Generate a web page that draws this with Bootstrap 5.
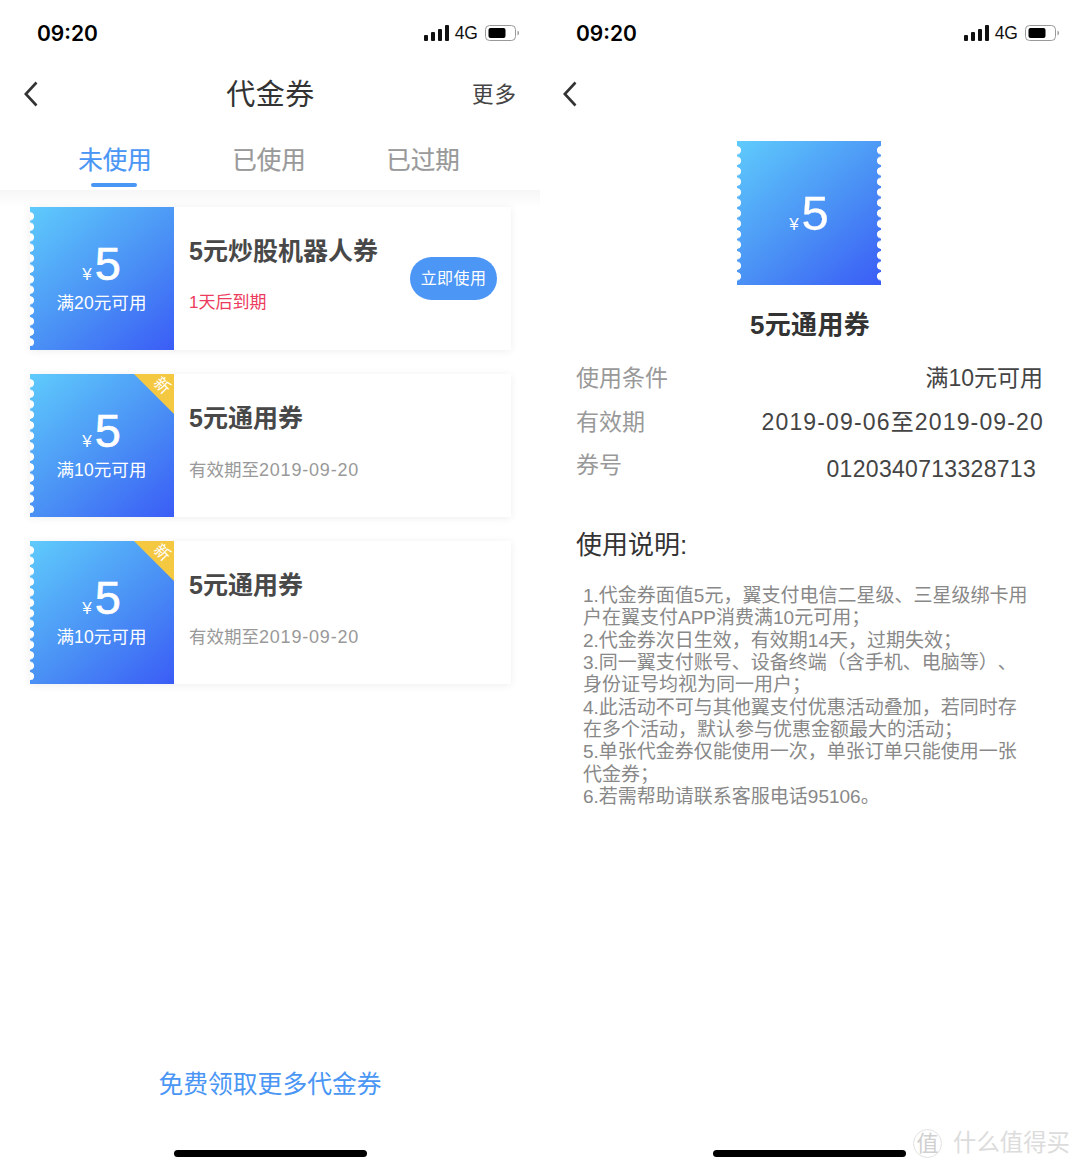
<!DOCTYPE html>
<html lang="zh">
<head>
<meta charset="utf-8">
<title>代金券</title>
<link href="https://cdn.jsdelivr.net/npm/bootstrap@5.3.0/dist/css/bootstrap.min.css" rel="stylesheet">
<style>
html,body{margin:0;height:1169px;overflow:hidden;background:#fff}
body{font-family:"Liberation Sans","Noto Sans CJK SC",sans-serif;color:#333;width:1080px;text-spacing-trim:space-all}
.screen{width:540px;height:1169px;flex:none;position:relative}
.status-row{height:66px;padding:0 21px 0 37px}
.clock{font-family:Inter,"Liberation Sans",sans-serif;font-size:21px;font-weight:600;color:#000;line-height:66px;margin-top:2px}
.net{font-size:17.5px;color:#111;margin:2px 7px 0 6px;line-height:1}
.topnav{height:56px;padding:0 24px 0 24px;position:relative}
.topnav svg{flex:0 0 14px}
.nav-side{flex:1}
.page-title{font-size:29px;color:#333;line-height:1;letter-spacing:.5px;flex:none;padding-top:2px}
.more{flex:1;font-size:21.500px;color:#444;line-height:1;letter-spacing:1px;text-align:right;padding:4px 0 0 0;margin-right:-1px}
.tabstrip{height:68px;padding-left:38px}
.tabitem{width:154px;height:68px;text-align:center;font-size:24.500px;color:#999;line-height:1;padding-top:27px;position:relative;-webkit-text-stroke:.2px currentColor}
.tabitem.on{color:#4a96f5}
.tabitem.on::after{content:"";position:absolute;left:53px;top:61px;width:46px;height:4px;border-radius:2px;background:#4a96f5}
.listarea{padding:17px 29px 0 30px;background:linear-gradient(#f6f6f6,#fff 17px);gap:24px}
.ticket{height:143px;background:#fff;box-shadow:0 1px 8px rgba(0,0,0,.07)}
.stub{width:144px;height:143px;flex:none;position:relative;overflow:hidden;color:#fff;padding-right:1px;background:linear-gradient(140deg,#5fcbfc 0%,#4a90f5 55%,#3a5cf6 100%)}
.stub::before{content:"";position:absolute;left:0;top:4px;bottom:4px;width:6px;background:radial-gradient(circle at 0 50%,#fff 3.8px,transparent 4.3px) 0 0/6px 10.5px repeat-y}
.amount{line-height:1;font-size:47px;margin-top:33px;height:47px;-webkit-text-stroke:.6px #fff}
.yen{font-size:17px;margin-right:3px;-webkit-text-stroke:0}
.cond{font-size:17.500px;line-height:1;margin-top:8px;letter-spacing:.1px}
.newtag{position:absolute;right:0;top:0;width:0;height:0;border-style:solid;border-width:0 40px 40px 0;border-color:transparent #f5c842 transparent transparent}
.newtxt{position:absolute;right:4px;top:4px;font-size:16px;color:#fff;line-height:1;transform:rotate(45deg)}
.ticket-body{padding-left:15px;min-width:0}
.ticket-name{font-size:25px;font-weight:700;color:#484848;line-height:1;margin-top:32px}
.ticket-note{font-size:17.500px;color:#999;line-height:1;margin-top:30px}
.ticket-note.warn{color:#ec3b5c;font-size:17px}
.dt{font-size:18px;letter-spacing:.8px}
.usebtn{width:87px;height:43px;border-radius:22px;background:#4c96f6;border:0;color:#fff;font-size:16px;padding:0;line-height:43px;margin:0 14px 0 auto;letter-spacing:.4px}
.getmore{position:absolute;left:0;right:0;top:1071px;text-align:center;font-size:24.800px;line-height:28px;color:#4a96f5}
.homebar{position:absolute;left:174px;top:1150px;width:193px;height:7px;border-radius:4px;background:#000}
.right-pane .homebar{left:173px}
.right-pane .status-row{padding-left:36px}
.right-pane .topnav{padding-left:23px}
.stamp{width:144px;height:144px;margin:19px 0 0 197px;position:relative;overflow:hidden;color:#fff;background:linear-gradient(140deg,#5fcbfc 0%,#4a90f5 55%,#3a5cf6 100%)}
.stamp::before,.stamp::after{content:"";position:absolute;top:4px;bottom:4px;width:6px}
.stamp::before{left:0;background:radial-gradient(circle at 0 50%,#fff 3.8px,transparent 4.3px) 0 0/6px 10.5px repeat-y}
.stamp::after{right:0;background:radial-gradient(circle at 100% 50%,#fff 3.8px,transparent 4.3px) 0 0/6px 10.5px repeat-y}
.stamp .amount{margin:0;font-size:49px;height:49px;-webkit-text-stroke:.3px #fff}
.stamp-title{font-size:26px;font-weight:700;color:#333;text-align:center;line-height:1;margin-top:27px;letter-spacing:.3px}
.kv{padding:0 37px 0 36px;height:44px;font-size:23px;line-height:1}
.kv-k{color:#999}
.kv-v{color:#444}
.kv-date{letter-spacing:1.15px;margin-right:-1px}
.kv-first{margin-top:29px}
.kv-code{padding-right:44px}
.kv-code .kv-k{margin-top:-1px}
.kv-code .kv-v{margin-top:3px;letter-spacing:.3px}
.howto{font-size:26px;color:#333;line-height:1;padding-left:36px;margin-top:33px}
.rules{padding-left:43px;margin:27px 0 0;font-size:19px;line-height:22.35px;color:#888;white-space:nowrap}
.mark-logo{position:absolute;right:10px;bottom:11px;color:#dcdcdc;font-size:23.400px;line-height:1;gap:11px}
.mark-coin{width:29px;height:29px;border:1px solid #e2e2e2;border-radius:50%;font-size:22px;line-height:27px;text-align:center;color:#d0d0d0}
</style>
</head>
<body>
<div class="d-flex">
 <section class="screen d-flex flex-column">
  <div class="status-row d-flex align-items-center justify-content-between">
   <span class="clock">09:20</span>
   <span class="d-flex align-items-center">
    <svg width="25" height="16" viewBox="0 0 25 16"><rect x="0" y="10" width="4" height="6" rx="1" fill="#111"/><rect x="7" y="7" width="4" height="9" rx="1" fill="#111"/><rect x="14" y="4" width="4" height="12" rx="1" fill="#111"/><rect x="21" y="0" width="4" height="16" rx="1" fill="#111"/></svg>
    <span class="net">4G</span>
    <svg width="34" height="16" viewBox="0 0 34 16"><rect x=".5" y=".5" width="30" height="15" rx="4" fill="none" stroke="#999"/><rect x="3.500" y="3" width="17" height="10" rx="2" fill="#000"/><path d="M32.500 5.500c1 .5 1.500 1.500 1.500 2.500s-.5 2-1.500 2.500z" fill="#999"/></svg>
   </span>
  </div>
  <div class="topnav d-flex align-items-center">
   <span class="nav-side"><svg class="d-block" width="14" height="26" viewBox="0 0 14 26"><path d="M12.500 1.500 1.800 13l10.700 11.500" fill="none" stroke="#333" stroke-width="2.600"/></svg></span>
   <span class="page-title">代金券</span>
   <span class="more">更多</span>
  </div>
  <div class="tabstrip d-flex">
   <div class="tabitem on">未使用</div>
   <div class="tabitem">已使用</div>
   <div class="tabitem">已过期</div>
  </div>
  <div class="listarea d-flex flex-column">
   <div class="ticket d-flex">
    <div class="stub text-center">
     <div class="amount"><span class="yen">¥</span>5</div>
     <div class="cond">满20元可用</div>
    </div>
    <div class="ticket-body">
     <div class="ticket-name">5元炒股机器人券</div>
     <div class="ticket-note warn">1天后到期</div>
    </div>
    <button class="usebtn align-self-center">立即使用</button>
   </div>
   <div class="ticket d-flex">
    <div class="stub text-center">
     <span class="newtag"></span><span class="newtxt">新</span>
     <div class="amount"><span class="yen">¥</span>5</div>
     <div class="cond">满10元可用</div>
    </div>
    <div class="ticket-body">
     <div class="ticket-name">5元通用券</div>
     <div class="ticket-note">有效期至<span class="dt">2019-09-20</span></div>
    </div>
   </div>
   <div class="ticket d-flex">
    <div class="stub text-center">
     <span class="newtag"></span><span class="newtxt">新</span>
     <div class="amount"><span class="yen">¥</span>5</div>
     <div class="cond">满10元可用</div>
    </div>
    <div class="ticket-body">
     <div class="ticket-name">5元通用券</div>
     <div class="ticket-note">有效期至<span class="dt">2019-09-20</span></div>
    </div>
   </div>
  </div>
  <div class="getmore">免费领取更多代金券</div>
  <div class="homebar"></div>
 </section>
 <section class="screen right-pane d-flex flex-column">
  <div class="status-row d-flex align-items-center justify-content-between">
   <span class="clock">09:20</span>
   <span class="d-flex align-items-center">
    <svg width="25" height="16" viewBox="0 0 25 16"><rect x="0" y="10" width="4" height="6" rx="1" fill="#111"/><rect x="7" y="7" width="4" height="9" rx="1" fill="#111"/><rect x="14" y="4" width="4" height="12" rx="1" fill="#111"/><rect x="21" y="0" width="4" height="16" rx="1" fill="#111"/></svg>
    <span class="net">4G</span>
    <svg width="34" height="16" viewBox="0 0 34 16"><rect x=".5" y=".5" width="30" height="15" rx="4" fill="none" stroke="#999"/><rect x="3.500" y="3" width="17" height="10" rx="2" fill="#000"/><path d="M32.500 5.500c1 .5 1.500 1.500 1.500 2.500s-.5 2-1.500 2.500z" fill="#999"/></svg>
   </span>
  </div>
  <div class="topnav d-flex align-items-center">
   <svg width="14" height="26" viewBox="0 0 14 26"><path d="M12.500 1.500 1.800 13l10.700 11.500" fill="none" stroke="#333" stroke-width="2.600"/></svg>
  </div>
  <div class="stamp d-flex align-items-center justify-content-center">
   <div class="amount"><span class="yen">¥</span>5</div>
  </div>
  <div class="stamp-title">5元通用券</div>
  <div class="kv kv-first d-flex justify-content-between"><span class="kv-k">使用条件</span><span class="kv-v">满10元可用</span></div>
  <div class="kv d-flex justify-content-between"><span class="kv-k">有效期</span><span class="kv-v kv-date">2019-09-06至2019-09-20</span></div>
  <div class="kv kv-code d-flex justify-content-between"><span class="kv-k">券号</span><span class="kv-v">0120340713328713</span></div>
  <div class="howto">使用说明:</div>
  <p class="rules">1.代金券面值5元，翼支付电信二星级、三星级绑卡用<br>户在翼支付APP消费满10元可用；<br>2.代金券次日生效，有效期14天，过期失效；<br>3.同一翼支付账号、设备终端（含手机、电脑等）、<br>身份证号均视为同一用户；<br>4.此活动不可与其他翼支付优惠活动叠加，若同时存<br>在多个活动，默认参与优惠金额最大的活动；<br>5.单张代金券仅能使用一次，单张订单只能使用一张<br>代金券；<br>6.若需帮助请联系客服电话95106。</p>
  <div class="homebar"></div>
  <div class="mark-logo d-flex align-items-center"><span class="mark-coin">值</span><span>什么值得买</span></div>
 </section>
</div>
<script src="https://cdn.jsdelivr.net/npm/bootstrap@5.3.0/dist/js/bootstrap.bundle.min.js"></script>
</body>
</html>
